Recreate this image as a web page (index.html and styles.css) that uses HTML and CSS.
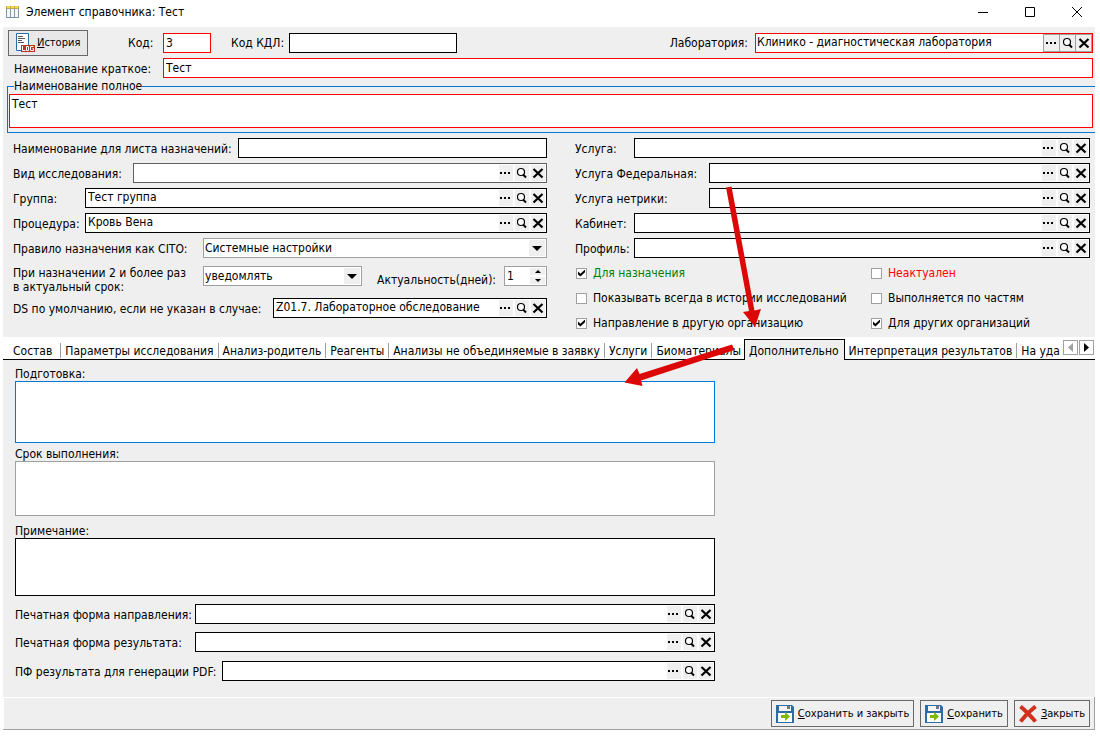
FILE: index.html
```html
<!DOCTYPE html>
<html lang="ru">
<head>
    <meta charset="UTF-8">
    <meta name="viewport" content="width=device-width, initial-scale=1.0">
    <title>Элемент справочника: Тест</title>
    <link rel="stylesheet" href="styles.css">
</head>
<body>
    <!-- Общие иконки -->
    <svg class="sprite" width="0" height="0" aria-hidden="true">
        <symbol id="i-dots" viewBox="0 0 14 14">
            <path d="M1 6h2v2H1zM5 6h2v2H5zM9 6h2v2H9z"/>
        </symbol>
        <symbol id="i-find" viewBox="0 0 14 14">
            <circle cx="6" cy="6" r="3.5" fill="#fff" stroke="#000" stroke-width="1.2"/>
            <path d="M8 8.5L11 11.5" stroke="#000" stroke-width="2"/>
        </symbol>
        <symbol id="i-clear" viewBox="0 0 14 14">
            <path d="M2.5 3L11.5 11.5M11.5 3L2.5 11.5" stroke="#000" stroke-width="2.2"/>
        </symbol>
        <symbol id="i-save" viewBox="0 0 18 18">
            <path d="M0 0h16l2 2v16H0z" fill="#2e6da4"/>
            <path d="M3 1h12v5H3z" fill="#f4f4f4"/>
            <path d="M11 1h3v3h-3z" fill="#777"/>
            <path d="M2 8h14v9H2z" fill="#fff"/>
            <path d="M5 10h4V7l5 4.500l-5 4.500v-3H5z" fill="#7fba00"/>
        </symbol>
    </svg>

    <header class="titlebar">
        <svg class="app-icon" width="13" height="12" viewBox="0 0 13 12">
            <path d="M0 0h13v12H0z" fill="#7d94ab"/>
            <path d="M1 3h3v8H1zM5 3h3v8H5zM9 3h3v8H9z" fill="#f3f8fc"/>
            <path d="M0 0h13v3H0z" fill="#b8a860"/>
            <path d="M1 0h3v2H1zM5 0h3v2H5zM9 0h3v2H9z" fill="#f6dc3c"/>
        </svg>
        <h1 class="caption">Элемент справочника: Тест</h1>
        <button class="win-btn" aria-label="Свернуть"><svg width="12" height="12"><path d="M1 6.500h10" stroke="#000"/></svg></button>
        <button class="win-btn" aria-label="Развернуть"><svg width="12" height="12"><path d="M1.500 1.500h9v9h-9z" fill="none" stroke="#000"/></svg></button>
        <button class="win-btn" aria-label="Закрыть окно"><svg width="12" height="12"><path d="M1 1l10 10M11 1L1 11" stroke="#000"/></svg></button>
    </header>

    <main class="window">
        <section class="card">
            <div class="top-row">
                <button class="btn btn-history">
                    <svg width="20" height="20" viewBox="0 0 20 20">
                        <path d="M1.500 .5h12v17h-12z" fill="#fff" stroke="#2e6da4"/>
                        <path d="M3 3.500h5M3 5.500h7M3 7.500h4M3 9.500h6" stroke="#555"/>
                        <path d="M6 12h14v7H6z" fill="#c0331f"/>
                        <path d="M7.500 13v4.500h3M11.500 13.500h2v4h-2zM18.500 13.500h-3v4h3v-2h-1" fill="none" stroke="#fff"/>
                    </svg>
                    <span><u>И</u>стория</span>
                </button>
                <label class="l-code" for="code">Код:</label>
                <input class="field red f-code" id="code" type="text" value="3">
                <label class="l-kdl" for="kdl">Код КДЛ:</label>
                <input class="field f-kdl" id="kdl" type="text">
                <label class="l-lab" for="lab">Лаборатория:</label>
                <div class="lookup red framed">
                    <input id="lab" type="text" value="Клинико - диагностическая лаборатория">
                    <button aria-label="Выбрать"><svg><use href="#i-dots"/></svg></button>
                    <button aria-label="Открыть"><svg><use href="#i-find"/></svg></button>
                    <button aria-label="Очистить"><svg><use href="#i-clear"/></svg></button>
                </div>
            </div>

            <div class="short-row">
                <label for="short">Наименование краткое:</label>
                <input class="field red" id="short" type="text" value="Тест">
            </div>

            <fieldset class="full-name">
                <legend><label for="full">Наименование полное</label></legend>
                <textarea class="memo red" id="full">Тест</textarea>
            </fieldset>

            <div class="columns">
                <div class="column">
                    <div class="row">
                        <label class="w225" for="sheet">Наименование для листа назначений:</label>
                        <input class="field" id="sheet" type="text">
                    </div>
                    <div class="row">
                        <label class="w120" for="kind">Вид исследования:</label>
                        <div class="lookup dim">
                            <input id="kind" type="text">
                            <button aria-label="Выбрать"><svg><use href="#i-dots"/></svg></button>
                            <button aria-label="Открыть"><svg><use href="#i-find"/></svg></button>
                            <button aria-label="Очистить"><svg><use href="#i-clear"/></svg></button>
                        </div>
                    </div>
                    <div class="row">
                        <label class="w72" for="group">Группа:</label>
                        <div class="lookup">
                            <input id="group" type="text" value="Тест группа">
                            <button aria-label="Выбрать"><svg><use href="#i-dots"/></svg></button>
                            <button aria-label="Открыть"><svg><use href="#i-find"/></svg></button>
                            <button aria-label="Очистить"><svg><use href="#i-clear"/></svg></button>
                        </div>
                    </div>
                    <div class="row">
                        <label class="w72" for="proc">Процедура:</label>
                        <div class="lookup">
                            <input id="proc" type="text" value="Кровь Вена">
                            <button aria-label="Выбрать"><svg><use href="#i-dots"/></svg></button>
                            <button aria-label="Открыть"><svg><use href="#i-find"/></svg></button>
                            <button aria-label="Очистить"><svg><use href="#i-clear"/></svg></button>
                        </div>
                    </div>
                    <div class="row">
                        <label class="w190" for="cito">Правило назначения как CITO:</label>
                        <div class="combo">
                            <select id="cito"><option>Системные настройки</option></select>
                            <svg width="16" height="16"><path d="M3 6h10l-5 5z"/></svg>
                        </div>
                    </div>
                    <div class="row tall">
                        <label class="w190" for="notify">При назначении 2 и более раз<br>в актуальный срок:</label>
                        <div class="combo">
                            <select id="notify"><option>уведомлять</option></select>
                            <svg width="16" height="16"><path d="M3 6h10l-5 5z"/></svg>
                        </div>
                        <label class="l-days" for="days">Актуальность(дней):</label>
                        <div class="spin">
                            <input id="days" type="text" value="1">
                            <div class="spin-btns">
                                <button aria-label="Больше"><svg width="15" height="7"><path d="M5 5h6l-3-3z"/></svg></button>
                                <button aria-label="Меньше"><svg width="15" height="7"><path d="M5 2h6l-3 3z"/></svg></button>
                            </div>
                        </div>
                    </div>
                    <div class="row">
                        <label class="w260" for="ds">DS по умолчанию, если не указан в случае:</label>
                        <div class="lookup">
                            <input id="ds" type="text" value="Z01.7. Лабораторное обследование">
                            <button aria-label="Выбрать"><svg><use href="#i-dots"/></svg></button>
                            <button aria-label="Открыть"><svg><use href="#i-find"/></svg></button>
                            <button aria-label="Очистить"><svg><use href="#i-clear"/></svg></button>
                        </div>
                    </div>
                </div>

                <div class="column">
                    <div class="row">
                        <label class="w59" for="service">Услуга:</label>
                        <div class="lookup">
                            <input id="service" type="text">
                            <button aria-label="Выбрать"><svg><use href="#i-dots"/></svg></button>
                            <button aria-label="Открыть"><svg><use href="#i-find"/></svg></button>
                            <button aria-label="Очистить"><svg><use href="#i-clear"/></svg></button>
                        </div>
                    </div>
                    <div class="row">
                        <label class="w134" for="federal">Услуга Федеральная:</label>
                        <div class="lookup">
                            <input id="federal" type="text">
                            <button aria-label="Выбрать"><svg><use href="#i-dots"/></svg></button>
                            <button aria-label="Открыть"><svg><use href="#i-find"/></svg></button>
                            <button aria-label="Очистить"><svg><use href="#i-clear"/></svg></button>
                        </div>
                    </div>
                    <div class="row">
                        <label class="w134" for="netrika">Услуга нетрики:</label>
                        <div class="lookup">
                            <input id="netrika" type="text">
                            <button aria-label="Выбрать"><svg><use href="#i-dots"/></svg></button>
                            <button aria-label="Открыть"><svg><use href="#i-find"/></svg></button>
                            <button aria-label="Очистить"><svg><use href="#i-clear"/></svg></button>
                        </div>
                    </div>
                    <div class="row">
                        <label class="w59" for="room">Кабинет:</label>
                        <div class="lookup">
                            <input id="room" type="text">
                            <button aria-label="Выбрать"><svg><use href="#i-dots"/></svg></button>
                            <button aria-label="Открыть"><svg><use href="#i-find"/></svg></button>
                            <button aria-label="Очистить"><svg><use href="#i-clear"/></svg></button>
                        </div>
                    </div>
                    <div class="row">
                        <label class="w59" for="profile">Профиль:</label>
                        <div class="lookup">
                            <input id="profile" type="text">
                            <button aria-label="Выбрать"><svg><use href="#i-dots"/></svg></button>
                            <button aria-label="Открыть"><svg><use href="#i-find"/></svg></button>
                            <button aria-label="Очистить"><svg><use href="#i-clear"/></svg></button>
                        </div>
                    </div>
                    <div class="checks">
                        <label class="check green"><input type="checkbox" checked>Для назначения</label>
                        <label class="check warn"><input type="checkbox">Неактуален</label>
                        <label class="check"><input type="checkbox">Показывать всегда в истории исследований</label>
                        <label class="check"><input type="checkbox">Выполняется по частям</label>
                        <label class="check"><input type="checkbox" checked>Направление в другую организацию</label>
                        <label class="check"><input type="checkbox" checked>Для других организаций</label>
                    </div>
                </div>
            </div>
        </section>

        <nav class="tabs">
            <div class="tab-list" role="tablist">
                <button class="tab first" role="tab">Состав</button>
                <button class="tab" role="tab">Параметры исследования</button>
                <button class="tab" role="tab">Анализ-родитель</button>
                <button class="tab" role="tab">Реагенты</button>
                <button class="tab" role="tab">Анализы не объединяемые в заявку</button>
                <button class="tab" role="tab">Услуги</button>
                <button class="tab last" role="tab">Биоматериалы</button>
                <button class="tab active" role="tab" aria-selected="true">Дополнительно</button>
                <button class="tab" role="tab">Интерпретация результатов</button>
                <button class="tab last" role="tab">На уда</button>
            </div>
            <button class="scroll" aria-label="Назад"><svg width="13" height="13"><path d="M9 2v9L4 6.500z" fill="#a0a0a0"/></svg></button>
            <button class="scroll" aria-label="Вперёд"><svg width="13" height="13"><path d="M4 2v9l5-4.500z"/></svg></button>
        </nav>

        <section class="page" role="tabpanel">
            <label for="prep">Подготовка:</label>
            <textarea class="memo blue m-prep" id="prep"></textarea>
            <label for="term">Срок выполнения:</label>
            <textarea class="memo grey m-term" id="term"></textarea>
            <label for="note">Примечание:</label>
            <textarea class="memo m-note" id="note"></textarea>
            <div class="row">
                <label class="w180" for="pf1">Печатная форма направления:</label>
                <div class="lookup">
                    <input id="pf1" type="text">
                    <button aria-label="Выбрать"><svg><use href="#i-dots"/></svg></button>
                    <button aria-label="Открыть"><svg><use href="#i-find"/></svg></button>
                    <button aria-label="Очистить"><svg><use href="#i-clear"/></svg></button>
                </div>
            </div>
            <div class="row">
                <label class="w180" for="pf2">Печатная форма результата:</label>
                <div class="lookup">
                    <input id="pf2" type="text">
                    <button aria-label="Выбрать"><svg><use href="#i-dots"/></svg></button>
                    <button aria-label="Открыть"><svg><use href="#i-find"/></svg></button>
                    <button aria-label="Очистить"><svg><use href="#i-clear"/></svg></button>
                </div>
            </div>
            <div class="row">
                <label class="w207" for="pf3">ПФ результата для генерации PDF:</label>
                <div class="lookup">
                    <input id="pf3" type="text">
                    <button aria-label="Выбрать"><svg><use href="#i-dots"/></svg></button>
                    <button aria-label="Открыть"><svg><use href="#i-find"/></svg></button>
                    <button aria-label="Очистить"><svg><use href="#i-clear"/></svg></button>
                </div>
            </div>
        </section>

        <footer class="actions">
            <button class="btn"><svg width="18" height="18"><use href="#i-save"/></svg><span><u>С</u>охранить и закрыть</span></button>
            <button class="btn"><svg width="18" height="18"><use href="#i-save"/></svg><span><u>С</u>охранить</span></button>
            <button class="btn"><svg width="18" height="18" viewBox="0 0 18 18"><path d="M1.500 1.500Q8 7 16.500 16.500M16.500 1.500Q8 8 1.500 16.500" fill="none" stroke="#d0301c" stroke-width="4"/></svg><span><u>З</u>акрыть</span></button>
        </footer>
    </main>

    <!-- Стрелки-подсказки поверх формы -->
    <svg class="arrows" width="150" height="210" viewBox="620 180 150 210" aria-hidden="true">
        <path d="M726 187.500l5.500-1 23 124 6.500-1.500-6 18-12-15 6-1z"/>
        <path d="M732 344.500l2.500 5.500-93.500 30.500 1.500 5.500-18-3.500 12.500-14.500 2.500 6z"/>
    </svg>
</body>
</html>
```
FILE: styles.css
```css
* {
    box-sizing: border-box;
}
body {
    margin: 0;
    background: #fff;
    color: #000;
    font-family: "DejaVu Sans Condensed", "Open Sans", sans-serif;
    font-size: 12px;
    line-height: 14px;
    position: relative;
}
input, select, textarea, button {
    font: inherit;
    color: inherit;
    margin: 0;
    padding: 0;
    border: 0;
    border-radius: 0;
    background: none;
    outline: none;
}
svg {
    display: block;
    flex: none;
}
label {
    white-space: nowrap;
}
.sprite {
    position: absolute;
}

/* Заголовок окна */
.titlebar {
    display: flex;
    align-items: center;
    height: 27px;
    padding: 0 0 3px 6px;
}
.caption {
    flex: 1;
    margin: 0 0 0 7px;
    font-size: 12px;
    font-weight: normal;
}
.win-btn {
    display: flex;
    align-items: center;
    justify-content: center;
    width: 47px;
    height: 24px;
}

/* Форма */
.window {
    margin: 0 5px 0 3px;
}
.card {
    height: 310px;
    padding-top: 3px;
    background: #efefef;
    overflow: hidden;
}
.top-row {
    display: flex;
    align-items: center;
    height: 26px;
    padding: 0 2px 0 5px;
}
.btn {
    display: flex;
    align-items: center;
    gap: 4px;
    height: 27px;
    padding: 0 4px;
    border: 1px solid #696969;
    background: #efefef;
    font-size: 11px;
    white-space: nowrap;
}
.btn-history {
    width: 80px;
    height: 26px;
    gap: 2px;
    padding: 0 6px;
    background: #e8e8e8;
}
.field {
    flex: 1;
    min-width: 0;
    height: 20px;
    padding: 0 2px 1px;
    border: 1px solid #000;
    background: #fff;
}
.l-code {
    width: 75px;
    padding-left: 40px;
}
.f-code {
    flex: none;
    width: 48px;
}
.l-kdl {
    width: 78px;
    padding-left: 20px;
}
.f-kdl {
    flex: none;
    width: 168px;
}
.l-lab {
    margin-left: auto;
    padding-right: 7px;
}
.short-row {
    display: flex;
    align-items: center;
    margin-top: 2px;
    padding: 0 2px 0 11px;
}
.short-row label {
    width: 149px;
    padding-top: 2px;
}
.full-name {
    height: 54px;
    margin: 1px -4px 0 4px;
    padding: 1px 5px 0 1px;
    border: 1px solid #0078d7;
}
.full-name legend {
    padding: 0;
    margin-left: 5px;
}
.memo {
    display: block;
    width: 100%;
    padding: 2px;
    border: 1px solid #000;
    background: #fff;
    resize: none;
    overflow: hidden;
}
.full-name .memo {
    height: 34px;
}
.red {
    border-color: #f00;
}
.blue {
    border-color: #0078d7;
}
.grey {
    border-color: #a0a0a0;
}

.columns {
    display: grid;
    grid-template-columns: 534fr 515fr;
    gap: 28px;
    padding: 5px 5px 0 10px;
}
.column {
    display: flex;
    flex-direction: column;
    gap: 5px;
    min-width: 0;
}
.row {
    display: flex;
    align-items: center;
}
.row > label {
    flex: none;
    padding-top: 2px;
}
.w59 { width: 59px; }
.w72 { width: 72px; }
.w120 { width: 120px; }
.w134 { width: 134px; }
.w180 { width: 180px; }
.w190 { width: 190px; }
.w207 { width: 207px; }
.w225 { width: 225px; }
.w260 { width: 260px; }

.tall {
    height: 27px;
    margin-top: 3px;
}
.tall > label {
    padding-top: 0;
}
.tall .combo,
.tall .spin {
    align-self: flex-start;
}
.tall .l-days {
    padding: 0 8px 0 15px;
}

/* Поле выбора из справочника */
.lookup {
    display: flex;
    flex: 1;
    align-items: center;
    gap: 2px;
    min-width: 0;
    height: 20px;
    padding: 1px;
    border: 1px solid #000;
    background: #fff;
}
.lookup input {
    flex: 1;
    min-width: 0;
    padding: 0 1px 2px;
}
.lookup button {
    width: 14px;
    height: 16px;
    background: #efefef;
}
.lookup svg {
    width: 14px;
    height: 14px;
}
.lookup.red {
    border-color: #f00;
}
.lookup.dim {
    border-color: #606060;
}
.framed {
    flex: 0 0 338px;
    gap: 0;
    padding: 0;
}
.framed button {
    width: 17px;
    height: 18px;
    margin-left: -1px;
    padding-left: 1px;
    border: 1px solid #a0a0a0;
}

.combo {
    display: grid;
    flex: 1;
    min-width: 0;
    height: 20px;
    padding: 1px;
    border: 1px solid #a0a0a0;
    background: #fff;
}
.combo select,
.combo svg {
    grid-area: 1 / 1;
}
.combo select {
    width: 100%;
    padding: 0 0 1px;
    appearance: none;
}
.combo svg {
    justify-self: end;
    background: #efefef;
    pointer-events: none;
}
.spin {
    display: flex;
    width: 43px;
    height: 20px;
    padding: 1px;
    border: 1px solid #a0a0a0;
    background: #fff;
}
.spin input {
    flex: 1;
    min-width: 0;
    padding: 0 1px 1px;
}
.spin-btns {
    display: grid;
    gap: 2px;
}
.spin-btns button {
    width: 15px;
    height: 7px;
    background: #efefef;
}

.checks {
    display: grid;
    grid-template-columns: 295px 1fr;
    row-gap: 11px;
    padding: 3px 0 0 1px;
}
.check {
    display: flex;
    align-items: center;
    gap: 6px;
}
.check input {
    display: grid;
    place-items: center;
    width: 11px;
    height: 11px;
    border: 1px solid #a0a0a0;
    background: #fff;
    appearance: none;
}
.check input:checked::before {
    content: "";
    width: 7px;
    height: 7px;
    background: #000;
    clip-path: polygon(0 30%, 35% 60%, 100% 0, 100% 40%, 35% 100%, 0 70%);
}
.green {
    color: #008000;
}
.warn {
    color: #f00;
}

/* Вкладки */
.tabs {
    display: flex;
    height: 23px;
    padding-right: 1px;
    background: #fff;
    box-shadow: inset 0 -1px 0 #000;
}
.tab-list {
    display: flex;
    flex: 1;
    align-items: center;
    min-width: 0;
    margin-right: 2px;
    overflow: hidden;
}
.tab {
    flex: none;
    height: 15px;
    margin-top: 3px;
    padding: 1px 4px 0;
    border-right: 1px solid #a0a0a0;
    white-space: nowrap;
}
.tab.first {
    padding: 1px 8px 0 10px;
}
.tab.last {
    padding-right: 3px;
    border-right: 0;
}
.tab.active {
    height: 21px;
    margin-top: 2px;
    padding: 1px 5px 0 4px;
    border: 1px solid #000;
    border-bottom: 0;
    background: #efefef;
}
.scroll {
    width: 15px;
    height: 15px;
    margin: 3px 0 0 1px;
    border: 1px solid #a0a0a0;
    background: #fff;
}

.page {
    padding: 6px 380px 16px 12px;
    background: #efefef;
}
.page > label {
    display: block;
    height: 15px;
    padding-top: 1px;
}
.memo + label {
    margin-top: 3px;
}
.m-prep {
    height: 62px;
}
.m-term {
    height: 55px;
    margin-bottom: 7px;
}
.m-note {
    height: 58px;
}
.page .row {
    margin-top: 8px;
}
.page .row:last-child {
    margin-top: 9px;
}

/* Нижняя панель */
.actions {
    display: flex;
    justify-content: flex-end;
    gap: 6px;
    height: 33px;
    padding: 3px 4px 0 0;
    border: solid #a0a0a0;
    border-width: 0 1px 1px 0;
    background: #efefef;
    box-shadow: inset 1px 1px 0 #fff;
}

.arrows {
    position: absolute;
    left: 620px;
    top: 180px;
    fill: #dc0808;
    pointer-events: none;
}
```
